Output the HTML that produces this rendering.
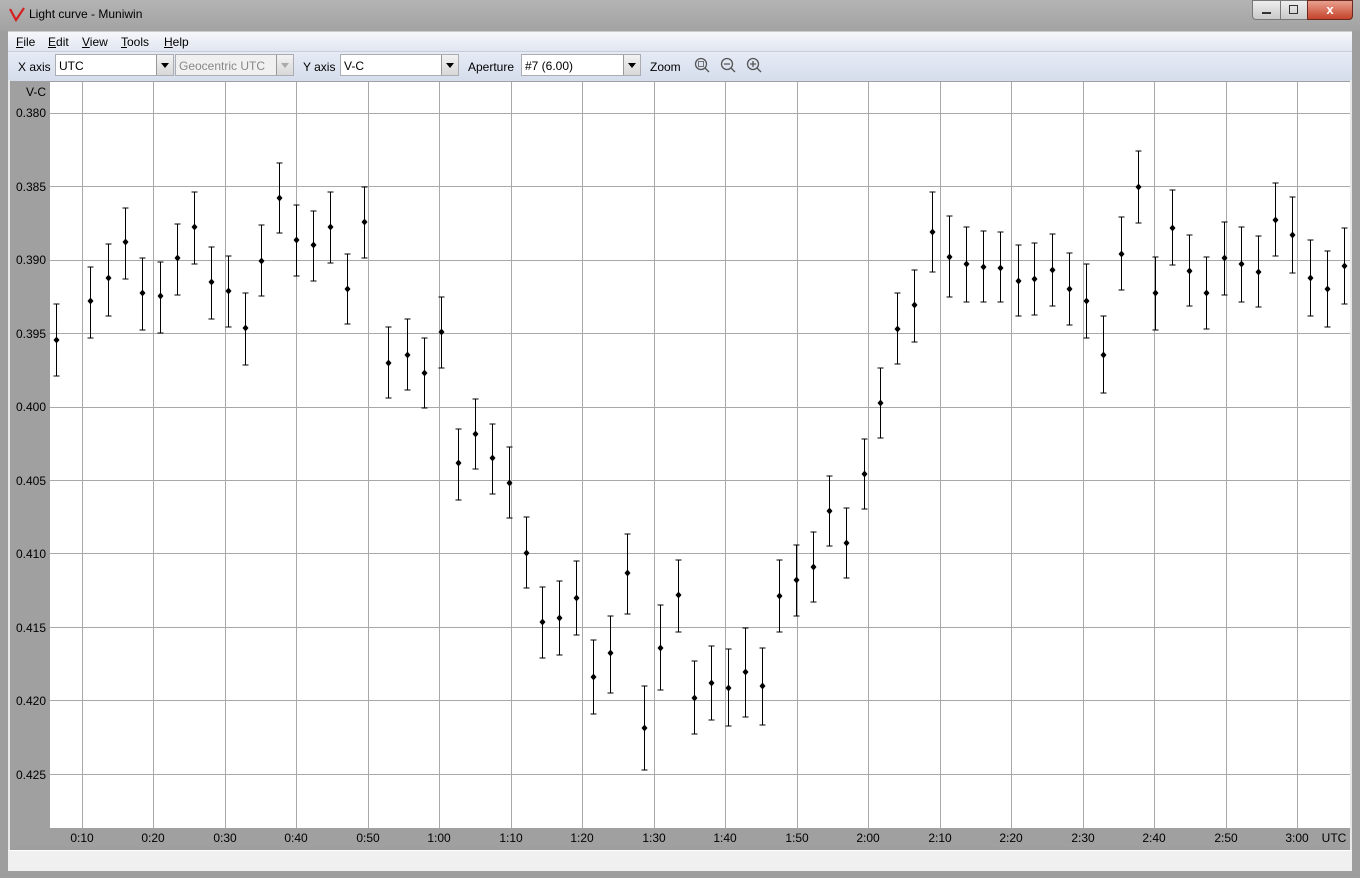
<!DOCTYPE html>
<html><head><meta charset="utf-8"><style>
body{margin:0;width:1360px;height:878px;overflow:hidden;background:#9e9e9e;font-family:"Liberation Sans",sans-serif;font-size:12px;position:relative}
.title{position:absolute;left:0;top:0;width:1360px;height:31px;background:linear-gradient(#b4b4b4,#a2a2a2)}
.title span{position:absolute;left:29px;top:7px;font-size:12px;color:#000}
.menu{position:absolute;left:8px;top:31px;width:1344px;height:20px;background:linear-gradient(#f5f7fb,#dfe5f0);border-top:1px solid #ccc}
.menu span{position:absolute;top:3px;font-size:12px}
.tb{position:absolute;left:8px;top:51px;width:1344px;height:29px;background:linear-gradient(#e6ebf5,#d5ddec);border-top:1px solid #c9cfda}
.tb .l{position:absolute;top:8px;font-size:12px}
.cb{position:absolute;top:2px;height:22px;background:#fff;border:1px solid #abadb3;box-sizing:border-box;font-size:12px;padding:4px 0 0 3px}
.cb.d{background:#f0f0f0;color:#888}
.cb i{position:absolute;right:0;top:0;width:16px;height:20px;background:linear-gradient(#f2f2f2,#d8d8d8);border-left:1px solid #999}
.cb i:after{content:"";position:absolute;left:4px;top:8px;border:4px solid transparent;border-top:5px solid #000}
.cb.d i:after{border-top-color:#aaa}
.status{position:absolute;left:8px;top:850px;width:1344px;height:20px;background:#f0f0f0;border-top:1px solid #fff}
.btns{position:absolute;right:8px;top:0;width:100px;height:20px}
</style></head><body>
<div class="title"><svg style="position:absolute;left:8px;top:6px" width="18" height="16"><path d="M2 3 L8 14 L16 2" stroke="#d42020" stroke-width="2.2" fill="none"/></svg><span>Light curve - Muniwin</span>
<div class="btns"><div style="position:absolute;left:0;top:0;width:27px;height:18px;background:linear-gradient(#eee,#c9c9c9);border:1px solid #777;border-radius:0 0 0 4px"><div style="position:absolute;left:9px;top:11px;width:9px;height:2px;background:#333"></div></div><div style="position:absolute;left:28px;top:0;width:26px;height:18px;background:linear-gradient(#eee,#c9c9c9);border:1px solid #777"><div style="position:absolute;left:8px;top:4px;width:7px;height:7px;border:1px solid #333"></div></div><div style="position:absolute;left:55px;top:0;width:44px;height:18px;background:linear-gradient(#e9a08f,#c5432b);border:1px solid #6b2a20;border-radius:0 0 4px 0;color:#fff;font-weight:bold;text-align:center;font-size:13px;line-height:18px">x</div></div></div>
<div class="menu"><span style="left:8px"><u>F</u>ile</span><span style="left:40px"><u>E</u>dit</span><span style="left:74px"><u>V</u>iew</span><span style="left:113px"><u>T</u>ools</span><span style="left:156px"><u>H</u>elp</span></div>
<div class="tb"><span class="l" style="left:10px">X axis</span>
<div class="cb" style="left:47px;width:119px">UTC<i></i></div>
<div class="cb d" style="left:167px;width:119px">Geocentric UTC<i></i></div>
<span class="l" style="left:295px">Y axis</span>
<div class="cb" style="left:332px;width:119px">V-C<i></i></div>
<span class="l" style="left:460px">Aperture</span>
<div class="cb" style="left:513px;width:120px">#7 (6.00)<i></i></div>
<span class="l" style="left:642px">Zoom</span>
<svg style="position:absolute;left:686px;top:5px" width="70" height="18" fill="none" stroke="#555" stroke-width="1.3"><circle cx="7" cy="7" r="5.5"/><path d="M11 11l4 4"/><rect x="4.5" y="4.5" width="5" height="5" stroke-width="0.8"/><circle cx="33" cy="7" r="5.5"/><path d="M37 11l4 4M30 7h6"/><circle cx="59" cy="7" r="5.5"/><path d="M63 11l4 4M56 7h6M59 4v6"/></svg>
</div>
<div style="position:absolute;left:8px;top:80px;width:2px;height:770px;background:#e8e8e8"></div>
<div style="position:absolute;left:1350px;top:80px;width:2px;height:770px;background:#e8e8e8"></div>
<svg id="p" style="position:absolute;left:0;top:0" width="1360" height="878" font-family="Liberation Sans, sans-serif" font-size="12">
<rect x="10" y="81" width="1340" height="766" fill="#a0a0a0"/>
<rect x="50" y="82" width="1300" height="746" fill="#fff"/>
<g fill="#000" text-anchor="end">
<text x="46" y="96">V-C</text>
<text x="46" y="117">0.380</text><text x="46" y="191">0.385</text><text x="46" y="264">0.390</text><text x="46" y="338">0.395</text><text x="46" y="411">0.400</text><text x="46" y="485">0.405</text><text x="46" y="558">0.410</text><text x="46" y="632">0.415</text><text x="46" y="705">0.420</text><text x="46" y="779">0.425</text>
</g>
<g fill="#000" text-anchor="middle">
<text x="82" y="842">0:10</text><text x="153" y="842">0:20</text><text x="225" y="842">0:30</text><text x="296" y="842">0:40</text><text x="368" y="842">0:50</text><text x="439" y="842">1:00</text><text x="511" y="842">1:10</text><text x="582" y="842">1:20</text><text x="654" y="842">1:30</text><text x="725" y="842">1:40</text><text x="797" y="842">1:50</text><text x="868" y="842">2:00</text><text x="940" y="842">2:10</text><text x="1011" y="842">2:20</text><text x="1083" y="842">2:30</text><text x="1154" y="842">2:40</text><text x="1226" y="842">2:50</text><text x="1297" y="842">3:00</text><text x="1334" y="842">UTC</text>
</g>
<g id="grid" stroke="#a8a8a8" stroke-width="1"></g>
<g id="pts"></g>
</svg>
<div class="status"></div>
<script>
var g=document.getElementById('grid'),s='';
[82,153,225,296,368,439,511,582,654,725,797,868,940,1011,1083,1154,1226,1297].forEach(function(x){s+='<line x1="'+(x+.5)+'" y1="82" x2="'+(x+.5)+'" y2="828"/>'});
for(var i=0;i<10;i++){var y=Math.round(113+i*73.4)+.5;s+='<line x1="50" y1="'+y+'" x2="1350" y2="'+y+'"/>'}
g.innerHTML=s;
var d=[[56,340,304,376],[90,301,267,338],[108,278,244,316],[125,242,208,279],[142,293,258,330],[160,296,262,333],[177,258,224,295],[194,227,192,264],[211,282,247,319],[228,291,256,327],[245,328,293,365],[261,261,225,296],[279,198,163,233],[296,240,205,276],[313,245,211,281],[330,227,192,263],[347,289,254,324],[364,222,187,258],[388,363,327,398],[407,355,319,390],[424,373,338,408],[441,332,297,368],[458,463,429,500],[475,434,399,469],[492,458,424,494],[509,483,447,518],[526,553,517,588],[542,622,587,658],[559,618,581,655],[576,598,561,635],[593,677,640,714],[610,653,616,693],[627,573,534,614],[644,728,686,770],[660,648,605,690],[678,595,560,632],[694,698,661,734],[711,683,646,720],[728,688,649,726],[745,672,628,717],[762,686,648,725],[779,596,560,632],[796,580,545,616],[813,567,532,602],[829,511,476,546],[846,543,508,578],[864,474,439,509],[880,403,368,438],[897,329,293,364],[914,305,270,342],[932,232,192,272],[949,257,216,297],[966,264,227,302],[983,267,231,302],[1000,268,232,302],[1018,281,245,316],[1034,279,243,315],[1052,270,234,306],[1069,289,253,325],[1086,301,264,338],[1103,355,316,393],[1121,254,217,290],[1138,187,151,223],[1155,293,257,330],[1172,228,190,265],[1189,271,235,306],[1206,293,257,329],[1224,258,222,295],[1241,264,227,302],[1258,272,236,307],[1275,220,183,256],[1292,235,197,273],[1310,278,240,316],[1327,289,251,327],[1344,266,228,304]];
s='';d.forEach(function(p){var x=p[0]+.5;s+='<path d="M'+x+' '+p[2]+'V'+p[3]+'M'+(x-3)+' '+p[2]+'h6M'+(x-3)+' '+p[3]+'h6" stroke="#000" fill="none"/><path d="M'+x+' '+(p[1]-3.5)+'l3 3.5l-3 3.5l-3-3.5z" fill="#000"/>'});
document.getElementById('pts').innerHTML=s;
</script>
</body></html>
